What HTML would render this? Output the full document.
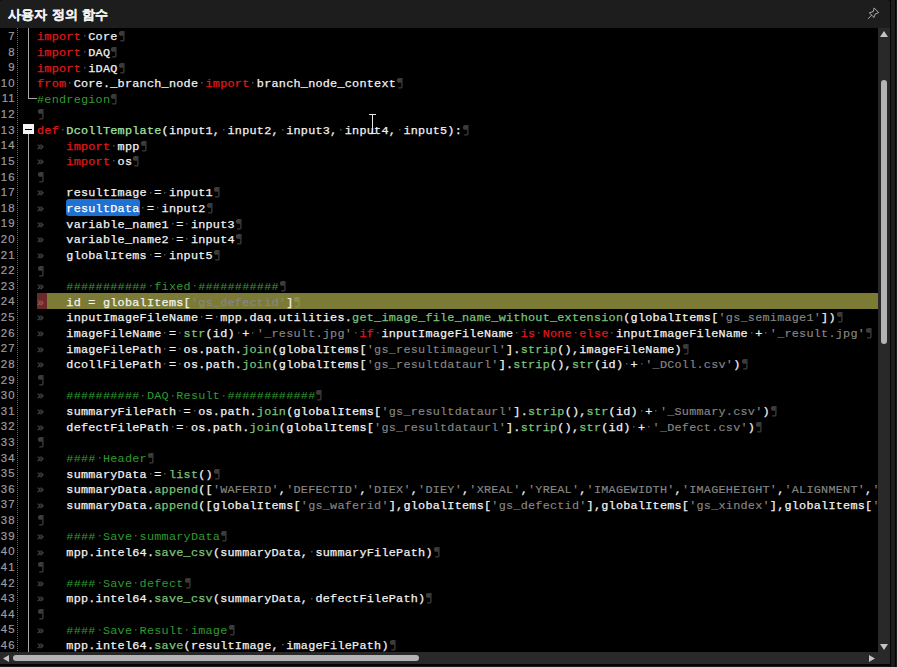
<!DOCTYPE html>
<html><head><meta charset="utf-8"><style>
html,body{margin:0;padding:0;}
body{width:897px;height:667px;overflow:hidden;background:#0c0c0c;position:relative;font-family:"Liberation Sans",sans-serif;}
#title{position:absolute;left:0;top:0;width:890px;height:28px;background:#1d1d1d;border-top-right-radius:3px;border-top-left-radius:3px;}
#title .t{position:absolute;left:8px;top:5.5px;color:#f0f0f0;font-size:13.4px;letter-spacing:0.2px;-webkit-text-stroke:0.3px currentColor;font-weight:bold;}
#rstrip{position:absolute;left:890px;top:0;width:7px;height:667px;background:#050505;}
#rstrip .a{position:absolute;left:1px;top:0;width:4px;height:667px;background:#1d1d1d;}
#rstrip .b{position:absolute;left:6px;top:0;width:1px;height:667px;background:#1d1d1d;}
#editor{position:absolute;left:0;top:28px;width:878px;height:624px;background:#000;overflow:hidden;}
#lines{position:absolute;left:0;top:-28px;}
.ln{position:absolute;left:0;height:15.615px;width:878px;font-family:"Liberation Mono",monospace;font-size:11.800px;letter-spacing:0.2488px;line-height:15.615px;white-space:pre;color:#f2f2f2;}
.ln .no{position:absolute;left:0;top:1.0px;width:15.7px;font-family:"Liberation Sans",sans-serif;font-size:11.4px;letter-spacing:1.1px;text-align:right;color:#9c9c9c;-webkit-text-stroke:0.2px currentColor;}
.ln .code{position:absolute;left:37px;top:2.3px;-webkit-text-stroke:0.25px currentColor;}
.hl{background:linear-gradient(to right,transparent 37px,#6c2929 37px,#6c2929 47px,#7b7b35 47px);}
.k{color:#e01818;}
.f{color:#7cc27c;}
.d{color:#a6e4a6;}
.c{color:#319a31;-webkit-text-stroke:0;}
.s{color:#878787;-webkit-text-stroke:0.15px currentColor;}
.w{color:#4a4a4a;-webkit-text-stroke:0;}
.sp{background:linear-gradient(#4e4e4e,#4e4e4e) 2.9px 5.1px/1.5px 1.5px no-repeat;}
.hl .tb{color:#9a5656;}
.tb{color:#4a4a4a;-webkit-text-stroke:0.35px currentColor;}
.sel{color:#fff;}
.pc{vertical-align:-2px;}
#dots{position:absolute;left:17px;top:0;width:1px;height:624px;background:repeating-linear-gradient(to bottom,#6a6a6a 0 1px,transparent 1px 2px);}
.fl{position:absolute;background:#a8a8a8;}
#vs{position:absolute;left:878px;top:28px;width:12px;height:636px;background:#292929;}
#hs{position:absolute;left:0;top:652px;width:878px;height:12px;background:#292929;}
#bot{position:absolute;left:0;top:664px;width:890px;height:3px;background:#030303;}
#bot .a{position:absolute;left:0;top:1.5px;width:890px;height:1.5px;background:#1b1b1b;}
</style></head><body>
<div id="title"><span class="t">사용자 정의 함수</span>
<svg style="position:absolute;left:865px;top:5px" width="18" height="16" viewBox="0 0 18 16"><path d="M9.4,3.2 L13.7,7.6 L10.1,9.1 L9,12.5 L4.3,7.9 L7.9,6.7 Z M6.5,10.3 L3.3,13.6" fill="none" stroke="#b8b8b8" stroke-width="0.9" stroke-linejoin="round" stroke-linecap="round"/></svg>
</div>
<div id="rstrip"><div class="a"></div><div class="b"></div></div>
<div id="editor">
<div id="lines">
<div style="position:absolute;left:66px;top:199.17px;width:74px;height:16.8px;background:#1f71d3;border-radius:3px;"></div>
<div class="ln" style="top:28.00px"><span class="no">7</span><span class="code"><span class="k">import</span><span class="sp"> </span>Core<svg class="pc" width="7.33" height="12" viewBox="0 -10 7.33 12"><path d="M5.6,-8.9 H3.2 C1.8,-8.9 0.9,-8 0.9,-6.6 C0.9,-5.2 1.8,-4.3 3.2,-4.3 H5.6 Z" fill="#3c3c3c"/><path d="M5.9,-8.9 V-0.3 Q5.9,0.9 4.6,0.9 H2.2" fill="none" stroke="#3c3c3c" stroke-width="1.3"/></svg></span></div>
<div class="ln" style="top:43.62px"><span class="no">8</span><span class="code"><span class="k">import</span><span class="sp"> </span>DAQ<svg class="pc" width="7.33" height="12" viewBox="0 -10 7.33 12"><path d="M5.6,-8.9 H3.2 C1.8,-8.9 0.9,-8 0.9,-6.6 C0.9,-5.2 1.8,-4.3 3.2,-4.3 H5.6 Z" fill="#3c3c3c"/><path d="M5.9,-8.9 V-0.3 Q5.9,0.9 4.6,0.9 H2.2" fill="none" stroke="#3c3c3c" stroke-width="1.3"/></svg></span></div>
<div class="ln" style="top:59.23px"><span class="no">9</span><span class="code"><span class="k">import</span><span class="sp"> </span>iDAQ<svg class="pc" width="7.33" height="12" viewBox="0 -10 7.33 12"><path d="M5.6,-8.9 H3.2 C1.8,-8.9 0.9,-8 0.9,-6.6 C0.9,-5.2 1.8,-4.3 3.2,-4.3 H5.6 Z" fill="#3c3c3c"/><path d="M5.9,-8.9 V-0.3 Q5.9,0.9 4.6,0.9 H2.2" fill="none" stroke="#3c3c3c" stroke-width="1.3"/></svg></span></div>
<div class="ln" style="top:74.84px"><span class="no">10</span><span class="code"><span class="k">from</span><span class="sp"> </span>Core._branch_node<span class="sp"> </span><span class="k">import</span><span class="sp"> </span>branch_node_context<svg class="pc" width="7.33" height="12" viewBox="0 -10 7.33 12"><path d="M5.6,-8.9 H3.2 C1.8,-8.9 0.9,-8 0.9,-6.6 C0.9,-5.2 1.8,-4.3 3.2,-4.3 H5.6 Z" fill="#3c3c3c"/><path d="M5.9,-8.9 V-0.3 Q5.9,0.9 4.6,0.9 H2.2" fill="none" stroke="#3c3c3c" stroke-width="1.3"/></svg></span></div>
<div class="ln" style="top:90.46px"><span class="no">11</span><span class="code"><span class="c">#endregion</span><svg class="pc" width="7.33" height="12" viewBox="0 -10 7.33 12"><path d="M5.6,-8.9 H3.2 C1.8,-8.9 0.9,-8 0.9,-6.6 C0.9,-5.2 1.8,-4.3 3.2,-4.3 H5.6 Z" fill="#3c3c3c"/><path d="M5.9,-8.9 V-0.3 Q5.9,0.9 4.6,0.9 H2.2" fill="none" stroke="#3c3c3c" stroke-width="1.3"/></svg></span></div>
<div class="ln" style="top:106.08px"><span class="no">12</span><span class="code"><svg class="pc" width="7.33" height="12" viewBox="0 -10 7.33 12"><path d="M5.6,-8.9 H3.2 C1.8,-8.9 0.9,-8 0.9,-6.6 C0.9,-5.2 1.8,-4.3 3.2,-4.3 H5.6 Z" fill="#3c3c3c"/><path d="M5.9,-8.9 V-0.3 Q5.9,0.9 4.6,0.9 H2.2" fill="none" stroke="#3c3c3c" stroke-width="1.3"/></svg></span></div>
<div class="ln" style="top:121.69px"><span class="no">13</span><span class="code"><span class="k">def</span><span class="sp"> </span><span class="d">DcollTemplate</span>(input1,<span class="sp"> </span>input2,<span class="sp"> </span>input3,<span class="sp"> </span>input4,<span class="sp"> </span>input5):<svg class="pc" width="7.33" height="12" viewBox="0 -10 7.33 12"><path d="M5.6,-8.9 H3.2 C1.8,-8.9 0.9,-8 0.9,-6.6 C0.9,-5.2 1.8,-4.3 3.2,-4.3 H5.6 Z" fill="#3c3c3c"/><path d="M5.9,-8.9 V-0.3 Q5.9,0.9 4.6,0.9 H2.2" fill="none" stroke="#3c3c3c" stroke-width="1.3"/></svg></span></div>
<div class="ln" style="top:137.31px"><span class="no">14</span><span class="code"><span class="tb">»   </span><span class="k">import</span><span class="sp"> </span>mpp<svg class="pc" width="7.33" height="12" viewBox="0 -10 7.33 12"><path d="M5.6,-8.9 H3.2 C1.8,-8.9 0.9,-8 0.9,-6.6 C0.9,-5.2 1.8,-4.3 3.2,-4.3 H5.6 Z" fill="#3c3c3c"/><path d="M5.9,-8.9 V-0.3 Q5.9,0.9 4.6,0.9 H2.2" fill="none" stroke="#3c3c3c" stroke-width="1.3"/></svg></span></div>
<div class="ln" style="top:152.92px"><span class="no">15</span><span class="code"><span class="tb">»   </span><span class="k">import</span><span class="sp"> </span>os<svg class="pc" width="7.33" height="12" viewBox="0 -10 7.33 12"><path d="M5.6,-8.9 H3.2 C1.8,-8.9 0.9,-8 0.9,-6.6 C0.9,-5.2 1.8,-4.3 3.2,-4.3 H5.6 Z" fill="#3c3c3c"/><path d="M5.9,-8.9 V-0.3 Q5.9,0.9 4.6,0.9 H2.2" fill="none" stroke="#3c3c3c" stroke-width="1.3"/></svg></span></div>
<div class="ln" style="top:168.53px"><span class="no">16</span><span class="code"><svg class="pc" width="7.33" height="12" viewBox="0 -10 7.33 12"><path d="M5.6,-8.9 H3.2 C1.8,-8.9 0.9,-8 0.9,-6.6 C0.9,-5.2 1.8,-4.3 3.2,-4.3 H5.6 Z" fill="#3c3c3c"/><path d="M5.9,-8.9 V-0.3 Q5.9,0.9 4.6,0.9 H2.2" fill="none" stroke="#3c3c3c" stroke-width="1.3"/></svg></span></div>
<div class="ln" style="top:184.15px"><span class="no">17</span><span class="code"><span class="tb">»   </span>resultImage<span class="sp"> </span>=<span class="sp"> </span>input1<svg class="pc" width="7.33" height="12" viewBox="0 -10 7.33 12"><path d="M5.6,-8.9 H3.2 C1.8,-8.9 0.9,-8 0.9,-6.6 C0.9,-5.2 1.8,-4.3 3.2,-4.3 H5.6 Z" fill="#3c3c3c"/><path d="M5.9,-8.9 V-0.3 Q5.9,0.9 4.6,0.9 H2.2" fill="none" stroke="#3c3c3c" stroke-width="1.3"/></svg></span></div>
<div class="ln" style="top:199.77px"><span class="no">18</span><span class="code"><span class="tb">»   </span><span class="sel">resultData</span><span class="sp"> </span>=<span class="sp"> </span>input2<svg class="pc" width="7.33" height="12" viewBox="0 -10 7.33 12"><path d="M5.6,-8.9 H3.2 C1.8,-8.9 0.9,-8 0.9,-6.6 C0.9,-5.2 1.8,-4.3 3.2,-4.3 H5.6 Z" fill="#3c3c3c"/><path d="M5.9,-8.9 V-0.3 Q5.9,0.9 4.6,0.9 H2.2" fill="none" stroke="#3c3c3c" stroke-width="1.3"/></svg></span></div>
<div class="ln" style="top:215.38px"><span class="no">19</span><span class="code"><span class="tb">»   </span>variable_name1<span class="sp"> </span>=<span class="sp"> </span>input3<svg class="pc" width="7.33" height="12" viewBox="0 -10 7.33 12"><path d="M5.6,-8.9 H3.2 C1.8,-8.9 0.9,-8 0.9,-6.6 C0.9,-5.2 1.8,-4.3 3.2,-4.3 H5.6 Z" fill="#3c3c3c"/><path d="M5.9,-8.9 V-0.3 Q5.9,0.9 4.6,0.9 H2.2" fill="none" stroke="#3c3c3c" stroke-width="1.3"/></svg></span></div>
<div class="ln" style="top:231.00px"><span class="no">20</span><span class="code"><span class="tb">»   </span>variable_name2<span class="sp"> </span>=<span class="sp"> </span>input4<svg class="pc" width="7.33" height="12" viewBox="0 -10 7.33 12"><path d="M5.6,-8.9 H3.2 C1.8,-8.9 0.9,-8 0.9,-6.6 C0.9,-5.2 1.8,-4.3 3.2,-4.3 H5.6 Z" fill="#3c3c3c"/><path d="M5.9,-8.9 V-0.3 Q5.9,0.9 4.6,0.9 H2.2" fill="none" stroke="#3c3c3c" stroke-width="1.3"/></svg></span></div>
<div class="ln" style="top:246.61px"><span class="no">21</span><span class="code"><span class="tb">»   </span>globalItems<span class="sp"> </span>=<span class="sp"> </span>input5<svg class="pc" width="7.33" height="12" viewBox="0 -10 7.33 12"><path d="M5.6,-8.9 H3.2 C1.8,-8.9 0.9,-8 0.9,-6.6 C0.9,-5.2 1.8,-4.3 3.2,-4.3 H5.6 Z" fill="#3c3c3c"/><path d="M5.9,-8.9 V-0.3 Q5.9,0.9 4.6,0.9 H2.2" fill="none" stroke="#3c3c3c" stroke-width="1.3"/></svg></span></div>
<div class="ln" style="top:262.23px"><span class="no">22</span><span class="code"><svg class="pc" width="7.33" height="12" viewBox="0 -10 7.33 12"><path d="M5.6,-8.9 H3.2 C1.8,-8.9 0.9,-8 0.9,-6.6 C0.9,-5.2 1.8,-4.3 3.2,-4.3 H5.6 Z" fill="#3c3c3c"/><path d="M5.9,-8.9 V-0.3 Q5.9,0.9 4.6,0.9 H2.2" fill="none" stroke="#3c3c3c" stroke-width="1.3"/></svg></span></div>
<div class="ln" style="top:277.84px"><span class="no">23</span><span class="code"><span class="tb">»   </span><span class="c">###########</span><span class="sp"> </span><span class="c">fixed</span><span class="sp"> </span><span class="c">###########</span><svg class="pc" width="7.33" height="12" viewBox="0 -10 7.33 12"><path d="M5.6,-8.9 H3.2 C1.8,-8.9 0.9,-8 0.9,-6.6 C0.9,-5.2 1.8,-4.3 3.2,-4.3 H5.6 Z" fill="#3c3c3c"/><path d="M5.9,-8.9 V-0.3 Q5.9,0.9 4.6,0.9 H2.2" fill="none" stroke="#3c3c3c" stroke-width="1.3"/></svg></span></div>
<div class="ln hl" style="top:293.45px"><span class="no">24</span><span class="code"><span class="tb">»   </span>id = globalItems[<span class="s">&#x27;gs_defectid&#x27;</span>]<svg class="pc" width="7.33" height="12" viewBox="0 -10 7.33 12"><path d="M5.6,-8.9 H3.2 C1.8,-8.9 0.9,-8 0.9,-6.6 C0.9,-5.2 1.8,-4.3 3.2,-4.3 H5.6 Z" fill="#8e8e52"/><path d="M5.9,-8.9 V-0.3 Q5.9,0.9 4.6,0.9 H2.2" fill="none" stroke="#8e8e52" stroke-width="1.3"/></svg></span></div>
<div class="ln" style="top:309.07px"><span class="no">25</span><span class="code"><span class="tb">»   </span>inputImageFileName<span class="sp"> </span>=<span class="sp"> </span>mpp.daq.utilities.<span class="f">get_image_file_name_without_extension</span>(globalItems[<span class="s">&#x27;gs_semimage1&#x27;</span>])<svg class="pc" width="7.33" height="12" viewBox="0 -10 7.33 12"><path d="M5.6,-8.9 H3.2 C1.8,-8.9 0.9,-8 0.9,-6.6 C0.9,-5.2 1.8,-4.3 3.2,-4.3 H5.6 Z" fill="#3c3c3c"/><path d="M5.9,-8.9 V-0.3 Q5.9,0.9 4.6,0.9 H2.2" fill="none" stroke="#3c3c3c" stroke-width="1.3"/></svg></span></div>
<div class="ln" style="top:324.69px"><span class="no">26</span><span class="code"><span class="tb">»   </span>imageFileName<span class="sp"> </span>=<span class="sp"> </span><span class="f">str</span>(id)<span class="sp"> </span>+<span class="sp"> </span><span class="s">&#x27;_result.jpg&#x27;</span><span class="sp"> </span><span class="k">if</span><span class="sp"> </span>inputImageFileName<span class="sp"> </span><span class="k">is</span><span class="sp"> </span><span class="k">None</span><span class="sp"> </span><span class="k">else</span><span class="sp"> </span>inputImageFileName<span class="sp"> </span>+<span class="sp"> </span><span class="s">&#x27;_result.jpg&#x27;</span><svg class="pc" width="7.33" height="12" viewBox="0 -10 7.33 12"><path d="M5.6,-8.9 H3.2 C1.8,-8.9 0.9,-8 0.9,-6.6 C0.9,-5.2 1.8,-4.3 3.2,-4.3 H5.6 Z" fill="#3c3c3c"/><path d="M5.9,-8.9 V-0.3 Q5.9,0.9 4.6,0.9 H2.2" fill="none" stroke="#3c3c3c" stroke-width="1.3"/></svg></span></div>
<div class="ln" style="top:340.30px"><span class="no">27</span><span class="code"><span class="tb">»   </span>imageFilePath<span class="sp"> </span>=<span class="sp"> </span>os.path.<span class="f">join</span>(globalItems[<span class="s">&#x27;gs_resultimageurl&#x27;</span>].<span class="f">strip</span>(),imageFileName)<svg class="pc" width="7.33" height="12" viewBox="0 -10 7.33 12"><path d="M5.6,-8.9 H3.2 C1.8,-8.9 0.9,-8 0.9,-6.6 C0.9,-5.2 1.8,-4.3 3.2,-4.3 H5.6 Z" fill="#3c3c3c"/><path d="M5.9,-8.9 V-0.3 Q5.9,0.9 4.6,0.9 H2.2" fill="none" stroke="#3c3c3c" stroke-width="1.3"/></svg></span></div>
<div class="ln" style="top:355.92px"><span class="no">28</span><span class="code"><span class="tb">»   </span>dcollFilePath<span class="sp"> </span>=<span class="sp"> </span>os.path.<span class="f">join</span>(globalItems[<span class="s">&#x27;gs_resultdataurl&#x27;</span>].<span class="f">strip</span>(),<span class="f">str</span>(id)<span class="sp"> </span>+<span class="sp"> </span><span class="s">&#x27;_DColl.csv&#x27;</span>)<svg class="pc" width="7.33" height="12" viewBox="0 -10 7.33 12"><path d="M5.6,-8.9 H3.2 C1.8,-8.9 0.9,-8 0.9,-6.6 C0.9,-5.2 1.8,-4.3 3.2,-4.3 H5.6 Z" fill="#3c3c3c"/><path d="M5.9,-8.9 V-0.3 Q5.9,0.9 4.6,0.9 H2.2" fill="none" stroke="#3c3c3c" stroke-width="1.3"/></svg></span></div>
<div class="ln" style="top:371.53px"><span class="no">29</span><span class="code"><svg class="pc" width="7.33" height="12" viewBox="0 -10 7.33 12"><path d="M5.6,-8.9 H3.2 C1.8,-8.9 0.9,-8 0.9,-6.6 C0.9,-5.2 1.8,-4.3 3.2,-4.3 H5.6 Z" fill="#3c3c3c"/><path d="M5.9,-8.9 V-0.3 Q5.9,0.9 4.6,0.9 H2.2" fill="none" stroke="#3c3c3c" stroke-width="1.3"/></svg></span></div>
<div class="ln" style="top:387.14px"><span class="no">30</span><span class="code"><span class="tb">»   </span><span class="c">##########</span><span class="sp"> </span><span class="c">DAQ</span><span class="sp"> </span><span class="c">Result</span><span class="sp"> </span><span class="c">############</span><svg class="pc" width="7.33" height="12" viewBox="0 -10 7.33 12"><path d="M5.6,-8.9 H3.2 C1.8,-8.9 0.9,-8 0.9,-6.6 C0.9,-5.2 1.8,-4.3 3.2,-4.3 H5.6 Z" fill="#3c3c3c"/><path d="M5.9,-8.9 V-0.3 Q5.9,0.9 4.6,0.9 H2.2" fill="none" stroke="#3c3c3c" stroke-width="1.3"/></svg></span></div>
<div class="ln" style="top:402.76px"><span class="no">31</span><span class="code"><span class="tb">»   </span>summaryFilePath<span class="sp"> </span>=<span class="sp"> </span>os.path.<span class="f">join</span>(globalItems[<span class="s">&#x27;gs_resultdataurl&#x27;</span>].<span class="f">strip</span>(),<span class="f">str</span>(id)<span class="sp"> </span>+<span class="sp"> </span><span class="s">&#x27;_Summary.csv&#x27;</span>)<svg class="pc" width="7.33" height="12" viewBox="0 -10 7.33 12"><path d="M5.6,-8.9 H3.2 C1.8,-8.9 0.9,-8 0.9,-6.6 C0.9,-5.2 1.8,-4.3 3.2,-4.3 H5.6 Z" fill="#3c3c3c"/><path d="M5.9,-8.9 V-0.3 Q5.9,0.9 4.6,0.9 H2.2" fill="none" stroke="#3c3c3c" stroke-width="1.3"/></svg></span></div>
<div class="ln" style="top:418.38px"><span class="no">32</span><span class="code"><span class="tb">»   </span>defectFilePath<span class="sp"> </span>=<span class="sp"> </span>os.path.<span class="f">join</span>(globalItems[<span class="s">&#x27;gs_resultdataurl&#x27;</span>].<span class="f">strip</span>(),<span class="f">str</span>(id)<span class="sp"> </span>+<span class="sp"> </span><span class="s">&#x27;_Defect.csv&#x27;</span>)<svg class="pc" width="7.33" height="12" viewBox="0 -10 7.33 12"><path d="M5.6,-8.9 H3.2 C1.8,-8.9 0.9,-8 0.9,-6.6 C0.9,-5.2 1.8,-4.3 3.2,-4.3 H5.6 Z" fill="#3c3c3c"/><path d="M5.9,-8.9 V-0.3 Q5.9,0.9 4.6,0.9 H2.2" fill="none" stroke="#3c3c3c" stroke-width="1.3"/></svg></span></div>
<div class="ln" style="top:433.99px"><span class="no">33</span><span class="code"><svg class="pc" width="7.33" height="12" viewBox="0 -10 7.33 12"><path d="M5.6,-8.9 H3.2 C1.8,-8.9 0.9,-8 0.9,-6.6 C0.9,-5.2 1.8,-4.3 3.2,-4.3 H5.6 Z" fill="#3c3c3c"/><path d="M5.9,-8.9 V-0.3 Q5.9,0.9 4.6,0.9 H2.2" fill="none" stroke="#3c3c3c" stroke-width="1.3"/></svg></span></div>
<div class="ln" style="top:449.61px"><span class="no">34</span><span class="code"><span class="tb">»   </span><span class="c">####</span><span class="sp"> </span><span class="c">Header</span><svg class="pc" width="7.33" height="12" viewBox="0 -10 7.33 12"><path d="M5.6,-8.9 H3.2 C1.8,-8.9 0.9,-8 0.9,-6.6 C0.9,-5.2 1.8,-4.3 3.2,-4.3 H5.6 Z" fill="#3c3c3c"/><path d="M5.9,-8.9 V-0.3 Q5.9,0.9 4.6,0.9 H2.2" fill="none" stroke="#3c3c3c" stroke-width="1.3"/></svg></span></div>
<div class="ln" style="top:465.22px"><span class="no">35</span><span class="code"><span class="tb">»   </span>summaryData<span class="sp"> </span>=<span class="sp"> </span><span class="f">list</span>()<svg class="pc" width="7.33" height="12" viewBox="0 -10 7.33 12"><path d="M5.6,-8.9 H3.2 C1.8,-8.9 0.9,-8 0.9,-6.6 C0.9,-5.2 1.8,-4.3 3.2,-4.3 H5.6 Z" fill="#3c3c3c"/><path d="M5.9,-8.9 V-0.3 Q5.9,0.9 4.6,0.9 H2.2" fill="none" stroke="#3c3c3c" stroke-width="1.3"/></svg></span></div>
<div class="ln" style="top:480.83px"><span class="no">36</span><span class="code"><span class="tb">»   </span>summaryData.<span class="f">append</span>([<span class="s">&#x27;WAFERID&#x27;</span>,<span class="s">&#x27;DEFECTID&#x27;</span>,<span class="s">&#x27;DIEX&#x27;</span>,<span class="s">&#x27;DIEY&#x27;</span>,<span class="s">&#x27;XREAL&#x27;</span>,<span class="s">&#x27;YREAL&#x27;</span>,<span class="s">&#x27;IMAGEWIDTH&#x27;</span>,<span class="s">&#x27;IMAGEHEIGHT&#x27;</span>,<span class="s">&#x27;ALIGNMENT&#x27;</span>,<span class="s">&#x27;PIXEL&#x27;</span>])<svg class="pc" width="7.33" height="12" viewBox="0 -10 7.33 12"><path d="M5.6,-8.9 H3.2 C1.8,-8.9 0.9,-8 0.9,-6.6 C0.9,-5.2 1.8,-4.3 3.2,-4.3 H5.6 Z" fill="#3c3c3c"/><path d="M5.9,-8.9 V-0.3 Q5.9,0.9 4.6,0.9 H2.2" fill="none" stroke="#3c3c3c" stroke-width="1.3"/></svg></span></div>
<div class="ln" style="top:496.45px"><span class="no">37</span><span class="code"><span class="tb">»   </span>summaryData.<span class="f">append</span>([globalItems[<span class="s">&#x27;gs_waferid&#x27;</span>],globalItems[<span class="s">&#x27;gs_defectid&#x27;</span>],globalItems[<span class="s">&#x27;gs_xindex&#x27;</span>],globalItems[<span class="s">&#x27;gs_yindex&#x27;</span>]])<svg class="pc" width="7.33" height="12" viewBox="0 -10 7.33 12"><path d="M5.6,-8.9 H3.2 C1.8,-8.9 0.9,-8 0.9,-6.6 C0.9,-5.2 1.8,-4.3 3.2,-4.3 H5.6 Z" fill="#3c3c3c"/><path d="M5.9,-8.9 V-0.3 Q5.9,0.9 4.6,0.9 H2.2" fill="none" stroke="#3c3c3c" stroke-width="1.3"/></svg></span></div>
<div class="ln" style="top:512.07px"><span class="no">38</span><span class="code"><svg class="pc" width="7.33" height="12" viewBox="0 -10 7.33 12"><path d="M5.6,-8.9 H3.2 C1.8,-8.9 0.9,-8 0.9,-6.6 C0.9,-5.2 1.8,-4.3 3.2,-4.3 H5.6 Z" fill="#3c3c3c"/><path d="M5.9,-8.9 V-0.3 Q5.9,0.9 4.6,0.9 H2.2" fill="none" stroke="#3c3c3c" stroke-width="1.3"/></svg></span></div>
<div class="ln" style="top:527.68px"><span class="no">39</span><span class="code"><span class="tb">»   </span><span class="c">####</span><span class="sp"> </span><span class="c">Save</span><span class="sp"> </span><span class="c">summaryData</span><svg class="pc" width="7.33" height="12" viewBox="0 -10 7.33 12"><path d="M5.6,-8.9 H3.2 C1.8,-8.9 0.9,-8 0.9,-6.6 C0.9,-5.2 1.8,-4.3 3.2,-4.3 H5.6 Z" fill="#3c3c3c"/><path d="M5.9,-8.9 V-0.3 Q5.9,0.9 4.6,0.9 H2.2" fill="none" stroke="#3c3c3c" stroke-width="1.3"/></svg></span></div>
<div class="ln" style="top:543.29px"><span class="no">40</span><span class="code"><span class="tb">»   </span>mpp.intel64.<span class="f">save_csv</span>(summaryData,<span class="sp"> </span>summaryFilePath)<svg class="pc" width="7.33" height="12" viewBox="0 -10 7.33 12"><path d="M5.6,-8.9 H3.2 C1.8,-8.9 0.9,-8 0.9,-6.6 C0.9,-5.2 1.8,-4.3 3.2,-4.3 H5.6 Z" fill="#3c3c3c"/><path d="M5.9,-8.9 V-0.3 Q5.9,0.9 4.6,0.9 H2.2" fill="none" stroke="#3c3c3c" stroke-width="1.3"/></svg></span></div>
<div class="ln" style="top:558.91px"><span class="no">41</span><span class="code"><svg class="pc" width="7.33" height="12" viewBox="0 -10 7.33 12"><path d="M5.6,-8.9 H3.2 C1.8,-8.9 0.9,-8 0.9,-6.6 C0.9,-5.2 1.8,-4.3 3.2,-4.3 H5.6 Z" fill="#3c3c3c"/><path d="M5.9,-8.9 V-0.3 Q5.9,0.9 4.6,0.9 H2.2" fill="none" stroke="#3c3c3c" stroke-width="1.3"/></svg></span></div>
<div class="ln" style="top:574.52px"><span class="no">42</span><span class="code"><span class="tb">»   </span><span class="c">####</span><span class="sp"> </span><span class="c">Save</span><span class="sp"> </span><span class="c">defect</span><svg class="pc" width="7.33" height="12" viewBox="0 -10 7.33 12"><path d="M5.6,-8.9 H3.2 C1.8,-8.9 0.9,-8 0.9,-6.6 C0.9,-5.2 1.8,-4.3 3.2,-4.3 H5.6 Z" fill="#3c3c3c"/><path d="M5.9,-8.9 V-0.3 Q5.9,0.9 4.6,0.9 H2.2" fill="none" stroke="#3c3c3c" stroke-width="1.3"/></svg></span></div>
<div class="ln" style="top:590.14px"><span class="no">43</span><span class="code"><span class="tb">»   </span>mpp.intel64.<span class="f">save_csv</span>(summaryData,<span class="sp"> </span>defectFilePath)<svg class="pc" width="7.33" height="12" viewBox="0 -10 7.33 12"><path d="M5.6,-8.9 H3.2 C1.8,-8.9 0.9,-8 0.9,-6.6 C0.9,-5.2 1.8,-4.3 3.2,-4.3 H5.6 Z" fill="#3c3c3c"/><path d="M5.9,-8.9 V-0.3 Q5.9,0.9 4.6,0.9 H2.2" fill="none" stroke="#3c3c3c" stroke-width="1.3"/></svg></span></div>
<div class="ln" style="top:605.75px"><span class="no">44</span><span class="code"><svg class="pc" width="7.33" height="12" viewBox="0 -10 7.33 12"><path d="M5.6,-8.9 H3.2 C1.8,-8.9 0.9,-8 0.9,-6.6 C0.9,-5.2 1.8,-4.3 3.2,-4.3 H5.6 Z" fill="#3c3c3c"/><path d="M5.9,-8.9 V-0.3 Q5.9,0.9 4.6,0.9 H2.2" fill="none" stroke="#3c3c3c" stroke-width="1.3"/></svg></span></div>
<div class="ln" style="top:621.37px"><span class="no">45</span><span class="code"><span class="tb">»   </span><span class="c">####</span><span class="sp"> </span><span class="c">Save</span><span class="sp"> </span><span class="c">Result</span><span class="sp"> </span><span class="c">image</span><svg class="pc" width="7.33" height="12" viewBox="0 -10 7.33 12"><path d="M5.6,-8.9 H3.2 C1.8,-8.9 0.9,-8 0.9,-6.6 C0.9,-5.2 1.8,-4.3 3.2,-4.3 H5.6 Z" fill="#3c3c3c"/><path d="M5.9,-8.9 V-0.3 Q5.9,0.9 4.6,0.9 H2.2" fill="none" stroke="#3c3c3c" stroke-width="1.3"/></svg></span></div>
<div class="ln" style="top:636.99px"><span class="no">46</span><span class="code"><span class="tb">»   </span>mpp.intel64.<span class="f">save</span>(resultImage,<span class="sp"> </span>imageFilePath)<svg class="pc" width="7.33" height="12" viewBox="0 -10 7.33 12"><path d="M5.6,-8.9 H3.2 C1.8,-8.9 0.9,-8 0.9,-6.6 C0.9,-5.2 1.8,-4.3 3.2,-4.3 H5.6 Z" fill="#3c3c3c"/><path d="M5.9,-8.9 V-0.3 Q5.9,0.9 4.6,0.9 H2.2" fill="none" stroke="#3c3c3c" stroke-width="1.3"/></svg></span></div>
</div>
<div id="dots"></div>
<div class="fl" style="left:28px;top:0;width:1px;height:70.5px"></div>
<div class="fl" style="left:28px;top:70px;width:9px;height:1px"></div>
<div style="position:absolute;left:23px;top:96px;width:11px;height:10px;background:#f4f4f4;"></div>
<div style="position:absolute;left:25px;top:100.5px;width:7px;height:1.5px;background:#000;"></div>
<div class="fl" style="left:28px;top:106px;width:1px;height:520px"></div>
<div style="position:absolute;left:369px;top:86px;width:7px;height:1px;background:#e8e8e8"></div>
<div style="position:absolute;left:372px;top:86px;width:1px;height:19px;background:#e8e8e8"></div>
<div style="position:absolute;left:369px;top:105px;width:7px;height:1px;background:#e8e8e8"></div>
</div>
<div id="vs">
<svg style="position:absolute;left:2px;top:3px" width="8" height="6"><polygon points="4,0 8,6 0,6" fill="#c4c4c4"/></svg>
<div style="position:absolute;left:2.8px;top:52px;width:6.4px;height:264px;background:#b4b4b4;border-radius:3.2px;"></div>
<svg style="position:absolute;left:2px;top:616px" width="8" height="6"><polygon points="0,0 8,0 4,6" fill="#c4c4c4"/></svg>
</div>
<div id="hs">
<svg style="position:absolute;left:3px;top:3px" width="6" height="7"><polygon points="6,0 6,7 0,3.5" fill="#c4c4c4"/></svg>
<div style="position:absolute;left:13px;top:3px;width:406px;height:6px;background:#b4b4b4;border-radius:3px;"></div>
<svg style="position:absolute;left:869px;top:3px" width="6" height="7"><polygon points="0,0 6,3.5 0,7" fill="#c4c4c4"/></svg>
</div>
<div id="bot"><div class="a"></div></div>
</body></html>
